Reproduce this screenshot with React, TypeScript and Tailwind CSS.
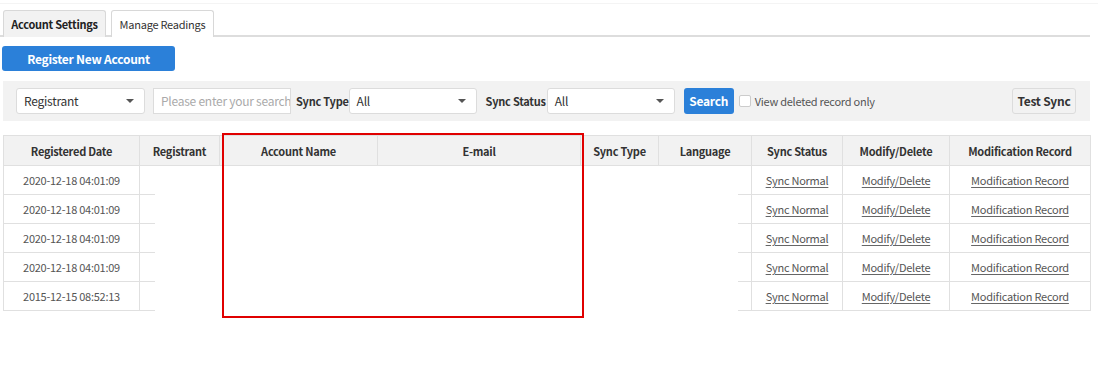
import React from "react";

const cols = [
  { label: "Registered Date", w: "w-[136px]" },
  { label: "Registrant", w: "w-[80px]" },
  { label: "Account Name", w: "w-[158px]" },
  { label: "E-mail", w: "w-[203px]" },
  { label: "Sync Type", w: "w-[78px]" },
  { label: "Language", w: "w-[93px]" },
  { label: "Sync Status", w: "w-[91px]" },
  { label: "Modify/Delete", w: "w-[107px]" },
  { label: "Modification Record", w: "w-[141px]" },
];

const rows = [
  "2020-12-18 04:01:09",
  "2020-12-18 04:01:09",
  "2020-12-18 04:01:09",
  "2020-12-18 04:01:09",
  "2015-12-15 08:52:13",
];

function Caret() {
  return (
    <svg width="8" height="4" viewBox="0 0 8 4" className="shrink-0">
      <path d="M0 0h8L4 4z" fill="#555" />
    </svg>
  );
}

function Select({ value, w }: { value: string; w: string }) {
  return (
    <div className={`${w} flex h-[26px] items-center justify-between rounded-[3px] border border-[#dcdcdc] bg-white pl-[7px] pr-[10px] text-[12px] text-[#333]`}>
      <span>{value}</span>
      <Caret />
    </div>
  );
}

function Link({ children }: { children: React.ReactNode }) {
  return <a className="text-[#555] underline decoration-[#666] underline-offset-2">{children}</a>;
}

export default function App() {
  return (
    <div className="relative h-[380px] w-[1108px] bg-white font-['Noto_Sans_CJK_KR','Open_Sans',sans-serif] text-[11px] leading-[16px] tracking-[-0.25px]">
      <div className="h-[3px]" />
      <div className="h-px w-[1098px] bg-[#f4f4f4]" />

      {/* tabs */}
      <div className="mt-[6px] flex w-[1090px] items-end gap-[5px] border-b-2 border-[#dddddd] pl-[3px]">
        <div className="-mb-[2px] flex h-[27px] w-[103px] items-center justify-center rounded-t-[3px] border border-b-0 border-[#d8d8d8] bg-[#f2f2f2] font-semibold text-[#222]">
          Account Settings
        </div>
        <div className="-mb-[2px] flex h-[27px] w-[103px] items-center justify-center rounded-t-[3px] border border-b-0 border-[#d8d8d8] bg-white text-[#333]">
          Manage Readings
        </div>
      </div>

      <button className="ml-[2px] mt-[9px] flex h-[25px] w-[173px] items-center justify-center rounded-[3px] bg-[#2b80d9] text-[12px] font-bold text-white">
        Register New Account
      </button>

      {/* filter bar */}
      <div className="ml-[3px] mt-[10px] flex h-[40px] w-[1087px] items-center bg-[#f2f2f2] pl-[13px] pr-[14px]">
        <Select value="Registrant" w="w-[129px]" />
        <div className="ml-[8px] flex h-[26px] w-[138px] items-center overflow-hidden whitespace-nowrap border border-[#dcdcdc] bg-white pl-[7px] text-[12px] text-[#aaa]">
          Please enter your search
        </div>
        <span className="ml-[5px] mr-0 font-semibold text-[#333]">Sync Type</span>
        <Select value="All" w="w-[128px]" />
        <span className="ml-[9px] mr-px font-semibold text-[#333]">Sync Status</span>
        <Select value="All" w="w-[128px]" />
        <button className="ml-[9px] flex h-[26px] w-[50px] items-center justify-center rounded-[3px] bg-[#2b80d9] text-[12px] font-bold text-white">
          Search
        </button>
        <span className="ml-[5px] h-[12px] w-[12px] rounded-[2px] border border-[#ccc] bg-white" />
        <span className="ml-[4px] text-[#555]">View deleted record only</span>
        <button className="ml-auto flex h-[26px] w-[64px] items-center justify-center rounded-[3px] border border-[#dcdcdc] bg-[#f2f2f2] text-[12px] font-bold text-[#333]">
          Test Sync
        </button>
      </div>

      {/* table */}
      <table className="ml-[3px] mt-[14px] w-[1087px] table-fixed border-collapse text-center">
        <thead>
          <tr className="h-[30px] bg-[#f2f2f2]">
            {cols.map((c) => (
              <th key={c.label} className={`${c.w} border border-[#e0e0e0] font-semibold text-[#333]`}>
                {c.label}
              </th>
            ))}
          </tr>
        </thead>
        <tbody>
          {rows.map((d, i) => (
            <tr key={i} className="h-[29px] text-[#555]">
              <td className="border border-[#e0e0e0]">{d}</td>
              <td className="border border-[#e0e0e0]" />
              <td className="border border-[#e0e0e0]" />
              <td className="border border-[#e0e0e0]" />
              <td className="border border-[#e0e0e0]" />
              <td className="border border-[#e0e0e0]" />
              <td className="border border-[#e0e0e0]"><Link>Sync Normal</Link></td>
              <td className="border border-[#e0e0e0]"><Link>Modify/Delete</Link></td>
              <td className="border border-[#e0e0e0]"><Link>Modification Record</Link></td>
            </tr>
          ))}
        </tbody>
      </table>

      {/* redacted area */}
      <div className="absolute left-[155px] top-[166px] h-[148px] w-[583px] bg-white" />
      <div className="absolute left-[222px] top-[133px] h-[185px] w-[362px] border-2 border-[#e00000]" />
    </div>
  );
}
